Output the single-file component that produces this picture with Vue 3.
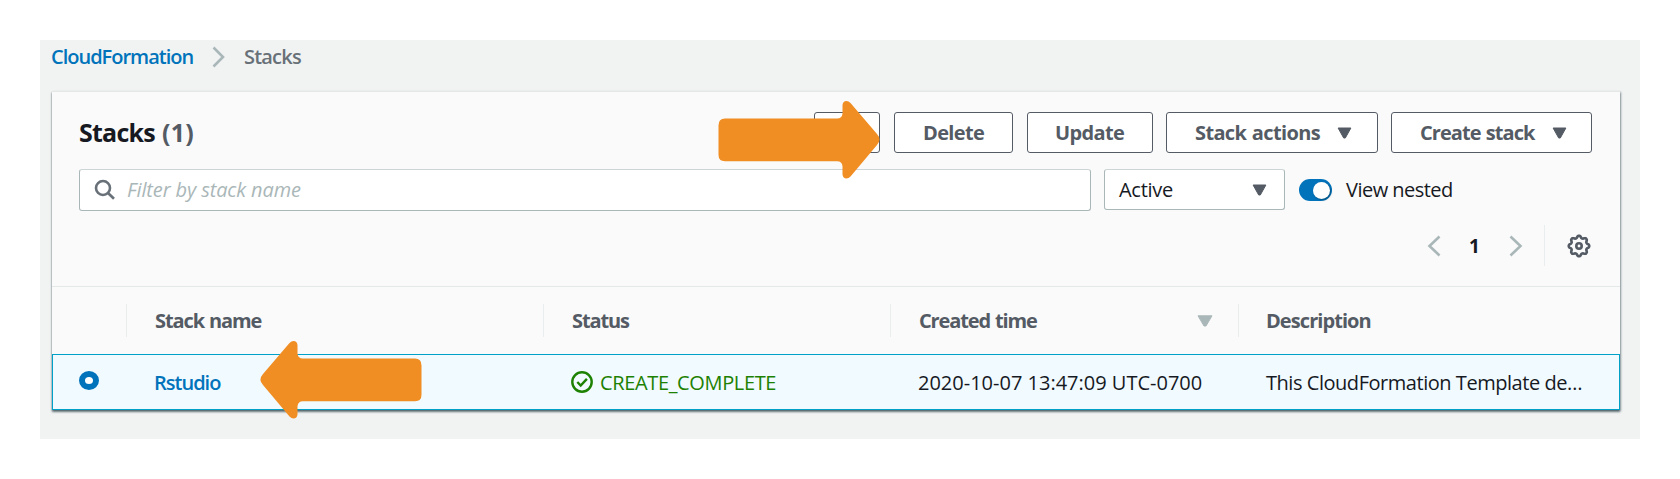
<script setup>
const buttons = [
  { label: 'Delete', cls: 'delete' },
  { label: 'Update', cls: 'update' },
  { label: 'Stack actions', cls: 'actions', caret: true },
  { label: 'Create stack', cls: 'create', caret: true },
]
const columns = [
  { label: 'Stack name', cls: 'name' },
  { label: 'Status', cls: 'status' },
  { label: 'Created time', cls: 'created', sort: true },
  { label: 'Description', cls: 'desc' },
]

// Eight-lobed ring of the settings gear, centred in a 24px box
const gearRing = Array.from({ length: 96 }, (_, i) => {
  const a = (i / 96) * Math.PI * 2
  const wave = Math.max(-0.75, Math.min(0.75, Math.cos(8 * a)))
  const r = 9.2 + 1.35 * wave
  return `${(12 + r * Math.cos(a)).toFixed(2)},${(12 + r * Math.sin(a)).toFixed(2)}`
}).join(' ')
</script>

<template>
  <div class="page">
    <nav class="crumbs">
      <a class="crumb-link">CloudFormation</a>
      <svg class="crumb-sep" width="14" height="22" viewBox="0 0 14 22"><path d="M1.5 1.5 11 11 1.5 20.5" /></svg>
      <span class="crumb-cur">Stacks</span>
    </nav>

    <section class="panel">
      <header class="head">
        <h1><span class="title">Stacks</span><span class="count">(1)</span></h1>
        <div class="buttons">
          <button class="btn refresh" aria-label="Refresh"></button>
          <button v-for="b in buttons" :key="b.label" class="btn" :class="b.cls">
            <span>{{ b.label }}</span>
            <svg v-if="b.caret" class="caret" width="15" height="12" viewBox="0 0 15 12"><path d="M1.1 1h12.8L8.3 11H6.7z" /></svg>
          </button>
        </div>
      </header>

      <div class="filters">
        <div class="search">
          <svg width="22" height="22" viewBox="0 0 22 22"><circle cx="9" cy="9" r="7" /><path d="m14 14 6 5.8" /></svg>
          <span>Filter by stack name</span>
        </div>
        <div class="select">
          <span>Active</span>
          <svg class="caret" width="15" height="12" viewBox="0 0 15 12"><path d="M1.1 1h12.8L8.3 11H6.7z" /></svg>
        </div>
        <span class="toggle"><i></i></span>
        <span class="nested">View nested</span>
      </div>

      <div class="paging">
        <svg class="chev" width="14" height="22" viewBox="0 0 14 22"><path d="M12.5 1.5 2.5 11l10 9.5" /></svg>
        <b>1</b>
        <svg class="chev" width="14" height="22" viewBox="0 0 14 22"><path d="M1.5 1.5 11.5 11l-10 9.5" /></svg>
        <span class="gear">
          <svg width="24" height="24" viewBox="0 0 24 24">
            <polygon :points="gearRing" />
            <circle cx="12" cy="12" r="2.7" />
          </svg>
        </span>
      </div>

      <div class="grid thead">
        <div class="pick"></div>
        <div v-for="c in columns" :key="c.label" class="th">
          <span :class="c.cls">{{ c.label }}</span>
          <svg v-if="c.sort" class="sort" width="16" height="12" viewBox="0 0 16 12"><path d="M1 .8h14L9 11H7z" /></svg>
        </div>
      </div>

      <div class="grid row">
        <div class="pick"><span class="radio"></span></div>
        <div class="td link">Rstudio</div>
        <div class="td ok">
          <svg width="22" height="22" viewBox="0 0 22 22"><circle cx="11" cy="11" r="9.7" /><path d="m6.3 11 3.4 3.5 6.2-6.6" /></svg>
          <span>CREATE_COMPLETE</span>
        </div>
        <div class="td date">2020-10-07 13:47:09 UTC-0700</div>
        <div class="td text">This CloudFormation Template de…</div>
      </div>
    </section>

    <svg class="arrow to-delete" width="162" height="80" viewBox="0 0 162 80">
      <path d="M7 18.5H119q5 0 5.5-5V5q.5-4 4-4 2 0 4 2L159 34q5 5.500 0 11l-26.500 31.500q-2 2-4 2-3.500 0-4-4V66.200q-.5-5-5.500-5H7q-6.500 0-6.500-6.500V25.500Q.5 18.500 7 18.500z" />
    </svg>
    <svg class="arrow to-name" width="162" height="80" viewBox="0 0 162 80">
      <path transform="matrix(-1 0 0 1 162 0)" d="M7 18.5H119q5 0 5.5-5V5q.5-4 4-4 2 0 4 2L159 34q5 5.500 0 11l-26.500 31.500q-2 2-4 2-3.500 0-4-4V66.200q-.5-5-5.500-5H7q-6.500 0-6.500-6.500V25.500Q.5 18.500 7 18.500z" />
    </svg>
  </div>
</template>

<style>
body { background: #fff; }
</style>

<style scoped>
* { box-sizing: border-box; }
.page {
  position: relative;
  width: 1600px;
  height: 399px;
  margin: 40px;
  padding: 0 20px 0 12px;
  background: #f1f3f3;
  color: #16191f;
  font: 400 20px/28px "Open Sans", "Noto Sans", sans-serif;
  white-space: nowrap;
}
svg { display: block; flex: none; overflow: visible; }
.crumbs { display: flex; align-items: center; height: 51px; padding-bottom: 17px; color: #687078; font-weight: 600; }
.crumb-link { width: 161px; margin-left: -1px; color: #0073bb; letter-spacing: -1px; }
.crumb-sep { margin-right: 18px; }
.crumb-sep path, .chev path { fill: none; stroke: #aab7b8; stroke-width: 2.6; }
.crumb-cur { letter-spacing: -.8px; }
.panel {
  height: 319px;
  background: #fafafa;
  border-top: 1px solid #e4e7e7;
  box-shadow: 0 2px 2px rgba(0, 28, 36, .5), 1px 1px 2px rgba(0, 28, 36, .3), -1px 1px 1px rgba(0, 28, 36, .06);
}
.head { display: flex; justify-content: space-between; align-items: flex-start; height: 77px; padding: 20px 28px 0 27px; }
h1 { display: flex; margin: 5px 0 0; font-size: 25px; line-height: 30px; font-weight: 700; }
.title { width: 83px; letter-spacing: -.75px; }
.count { color: #545b64; letter-spacing: .2px; }
.buttons { display: flex; }
.btn {
  display: flex;
  align-items: center;
  height: 41px;
  padding: 0 0 0 28px;
  border: 1px solid #545b64;
  border-radius: 3px;
  background: #fff;
  color: #545b64;
  font: 700 20px/28px "Open Sans", "Noto Sans", sans-serif;
}
.caret path { fill: #545b64; stroke: #545b64; stroke-linejoin: round; }
.refresh { width: 66px; margin-right: 14px; }
.delete { width: 119px; margin-right: 14px; letter-spacing: -.64px; }
.update { width: 126px; margin-right: 13px; padding-left: 27px; letter-spacing: -.64px; }
.actions { width: 212px; margin-right: 13px; letter-spacing: -.64px; word-spacing: 1px; }
.create { width: 201px; letter-spacing: -.94px; word-spacing: 1px; }
.actions span { width: 142px; text-align: left; }
.create span { width: 132px; text-align: left; }
.filters { display: flex; align-items: center; height: 42px; padding-left: 27px; }
.search {
  display: flex;
  align-items: center;
  gap: 11px;
  width: 1012px;
  height: 42px;
  margin-right: 13px;
  padding-left: 14px;
  border: 1px solid #aab7b8;
  border-top-color: #cdd5d6;
  border-radius: 3px;
  background: #fff;
  color: #aab7b8;
  font-style: italic;
  letter-spacing: -.11px;
}
.search svg { fill: none; stroke: #687078; stroke-width: 2.6; }
.select {
  display: flex;
  align-items: center;
  justify-content: space-between;
  width: 181px;
  height: 41px;
  margin: 0 14px 1px 0;
  padding: 0 17px 0 14px;
  border: 1px solid #aab7b8;
  border-top-color: #cdd5d6;
  border-radius: 3px;
  background: #fff;
  letter-spacing: -.3px;
}
.toggle { display: flex; align-items: center; justify-content: flex-end; width: 33px; height: 22px; padding-right: 2.5px; border-radius: 11px; background: #0073bb; }
.toggle i { width: 17px; height: 17px; border-radius: 50%; background: #fff; box-shadow: 1px 1px 2px rgba(0, 28, 36, .4); }
.nested { margin-left: 14px; letter-spacing: -.52px; }
.paging { display: flex; align-items: center; justify-content: flex-end; height: 75px; padding: 0 28px 6px 0; }
.paging b { width: 12px; margin: 0 28px 0 28px; font-size: 19px; }
.gear { display: flex; align-items: center; height: 41px; margin-left: 21px; padding-left: 22px; margin-right: 1px; border-left: 1px solid #eaeded; }
.gear svg { fill: none; stroke: #545b64; stroke-width: 2.6; stroke-linejoin: round; }
.grid { display: grid; grid-template-columns: 74px 417px 347px 348px 1fr; align-items: center; }
.thead { height: 68px; border-top: 1px solid #e3e8e8; color: #545b64; font-weight: 700; }
.th { display: flex; align-items: center; height: 33px; padding-left: 28px; border-left: 1px solid #eaeded; }
.name { letter-spacing: -1.1px; word-spacing: 1px; }
.status { letter-spacing: -1.1px; }
.created { letter-spacing: -1.14px; word-spacing: 1px; width: 278px; }
.desc { margin-left: -1px; letter-spacing: -.93px; }
.sort path { fill: #aab7b8; stroke: #aab7b8; stroke-linejoin: round; }
.row { height: 56px; border: 1px solid #00a1c9; background: #f1faff; grid-template-columns: 73px 417px 347px 348px 1fr; }
.pick { padding-left: 26px; }
.radio { display: block; width: 20px; height: 19px; margin-bottom: 3px; border: 6px solid #0073bb; border-radius: 50%; background: #fff; }
.td { padding-left: 28px; }
.link, .date, .text, .ok span { padding-top: 1px; }
.link { color: #0073bb; font-weight: 600; letter-spacing: -1px; }
.ok { display: flex; align-items: center; gap: 7px; color: #1d8102; letter-spacing: -.36px; }
.ok svg { fill: none; stroke: #1d8102; stroke-width: 2.4; }
.text { padding-left: 28px; letter-spacing: -.46px; }
.arrow { position: absolute; fill: #f08e23; }
.to-delete { left: 678px; top: 60px; }
.to-name { left: 220px; top: 300px; }
</style>
